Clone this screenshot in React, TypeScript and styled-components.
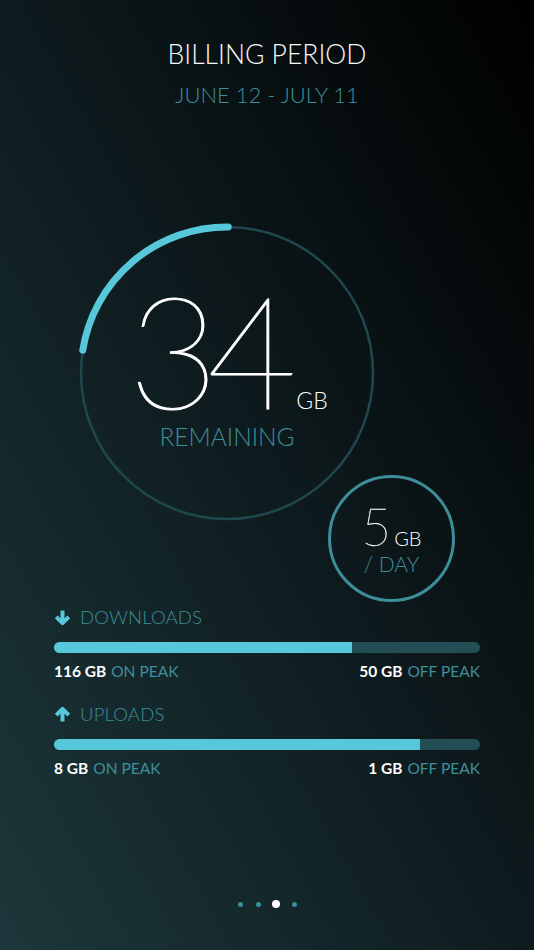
import React from "react";
import styled, { createGlobalStyle } from "styled-components";

const GlobalStyle = createGlobalStyle`
  html, body {
    margin: 0;
    padding: 0;
  }
  body {
    width: 534px;
    height: 950px;
    overflow: hidden;
    font-family: "Lato", "Open Sans", sans-serif;
    background: linear-gradient(to top right, #1c373b 0%, #0e1b1e 50%, #000000 100%);
  }
`;

const TEAL = "#3f8f9b";
const CYAN = "#56c8da";
const TRACK = "#244e55";

const Page = styled.div`
  box-sizing: border-box;
  width: 534px;
  height: 950px;
  padding: 0 54px;
  display: flex;
  flex-direction: column;
`;

const Header = styled.header`
  margin-top: 38px;
  display: flex;
  flex-direction: column;
  align-items: center;
`;

const Title = styled.h1`
  margin: 0;
  font-size: 26.5px;
  line-height: 32px;
  font-weight: 300;
  color: #f7f7f7;
`;

const Subtitle = styled.div`
  margin-top: 11px;
  font-size: 22px;
  line-height: 28px;
  font-weight: 300;
  color: ${TEAL};
`;

const GaugeArea = styled.section`
  position: relative;
  margin-top: 114px;
  height: 383px;
`;

const Gauge = styled.div`
  position: relative;
  margin-left: 23px;
  width: 300px;
  height: 300px;
  display: flex;
  flex-direction: column;
  align-items: center;
`;

const Ring = styled.svg`
  position: absolute;
  inset: 0;
`;

const BigRow = styled.div`
  position: relative;
  margin-top: 66px;
  height: 120px;
  display: flex;
  align-items: baseline;
  padding-left: 2px;
`;

const BigNumber = styled.span`
  font-size: 156px;
  line-height: 120px;
  font-weight: 200;
  color: #ffffff;
  letter-spacing: -12px;
  -webkit-text-stroke: 1.1px #ffffff;
`;

const BigUnit = styled.span`
  margin-left: 11px;
  font-size: 23px;
  line-height: 24px;
  font-weight: 300;
  color: #ffffff;
`;

const Remaining = styled.div`
  position: relative;
  margin-top: 13px;
  font-size: 24.5px;
  line-height: 30px;
  font-weight: 300;
  color: ${TEAL};
`;

const DayBadge = styled.div`
  position: absolute;
  left: 274px;
  top: 252px;
  box-sizing: border-box;
  width: 127px;
  height: 127px;
  border-radius: 50%;
  border: 3px solid #3d8e99;
  display: flex;
  flex-direction: column;
  align-items: center;
  padding-top: 24px;
`;

const DayRow = styled.div`
  display: flex;
  align-items: baseline;
  height: 50px;
`;

const DayNumber = styled.span`
  font-size: 51px;
  line-height: 50px;
  font-weight: 200;
  color: #ffffff;
  -webkit-text-stroke: 0.3px #ffffff;
`;

const DayUnit = styled.span`
  margin-left: 3px;
  font-size: 20px;
  line-height: 22px;
  font-weight: 300;
  color: #ffffff;
`;

const DayLabel = styled.div`
  font-size: 21px;
  line-height: 24px;
  font-weight: 300;
  color: ${TEAL};
`;

const Usage = styled.section<{ $first?: boolean }>`
  margin-top: ${(p) => (p.$first ? "0" : "22px")};
  display: flex;
  flex-direction: column;
`;

const UsageHeader = styled.div`
  display: flex;
  align-items: center;
  gap: 9px;
  height: 22px;
`;

const UsageTitle = styled.span`
  font-size: 18.5px;
  line-height: 22px;
  font-weight: 300;
  color: ${TEAL};
  letter-spacing: 0.2px;
`;

const Bar = styled.div`
  margin-top: 14px;
  height: 11px;
  border-radius: 6px;
  background: ${TRACK};
  overflow: hidden;
  display: flex;
`;

const BarFill = styled.div`
  height: 100%;
  background: ${CYAN};
`;

const Labels = styled.div`
  margin-top: 8px;
  display: flex;
  justify-content: space-between;
  font-size: 15.5px;
  line-height: 20px;
`;

const Label = styled.span`
  color: ${TEAL};
  font-weight: 400;
`;

const Value = styled.b`
  color: #ffffff;
  font-weight: 700;
  margin-right: 5px;
`;

const Pager = styled.nav`
  margin-top: auto;
  margin-bottom: 42px;
  display: flex;
  justify-content: center;
  align-items: center;
  gap: 13px;
`;

const Dot = styled.span<{ $active?: boolean }>`
  width: ${(p) => (p.$active ? "8px" : "5px")};
  height: ${(p) => (p.$active ? "8px" : "5px")};
  margin: ${(p) => (p.$active ? "0 -1.5px" : "0")};
  border-radius: 50%;
  background: ${(p) => (p.$active ? "#ffffff" : "#3a8f9a")};
`;

const Arrow = ({ up }: { up?: boolean }) => (
  <svg width="17" height="15" viewBox="0 0 17 15" style={{ transform: up ? "rotate(180deg)" : undefined }}>
    <path d="M8.5 0.5 V12.5 M2.2 6.8 L8.5 13.1 L14.8 6.8" fill="none" stroke={CYAN} strokeWidth="4" strokeLinejoin="miter" />
  </svg>
);

const arcPath = (() => {
  const c = 150;
  const r = 146;
  const a1 = (-89.5 * Math.PI) / 180;
  const a2 = (-171 * Math.PI) / 180;
  const x1 = c + r * Math.cos(a1);
  const y1 = c + r * Math.sin(a1);
  const x2 = c + r * Math.cos(a2);
  const y2 = c + r * Math.sin(a2);
  return `M ${x1} ${y1} A ${r} ${r} 0 0 0 ${x2} ${y2}`;
})();

type UsageData = {
  title: string;
  up?: boolean;
  onPeak: string;
  offPeak: string;
  ratio: number;
};

const usage: UsageData[] = [
  { title: "DOWNLOADS", onPeak: "116 GB", offPeak: "50 GB", ratio: 298 / 426 },
  { title: "UPLOADS", up: true, onPeak: "8 GB", offPeak: "1 GB", ratio: 366 / 426 },
];

export default function App() {
  return (
    <>
      <GlobalStyle />
      <Page>
        <Header>
          <Title>BILLING PERIOD</Title>
          <Subtitle>JUNE 12 - JULY 11</Subtitle>
        </Header>
        <GaugeArea>
          <Gauge>
            <Ring width="300" height="300" viewBox="0 0 300 300">
              <circle cx="150" cy="150" r="146" fill="none" stroke="#1f474d" strokeWidth="2.5" />
              <path d={arcPath} fill="none" stroke={CYAN} strokeWidth="7" strokeLinecap="round" />
            </Ring>
            <BigRow>
              <BigNumber>34</BigNumber>
              <BigUnit>GB</BigUnit>
            </BigRow>
            <Remaining>REMAINING</Remaining>
          </Gauge>
          <DayBadge>
            <DayRow>
              <DayNumber>5</DayNumber>
              <DayUnit>GB</DayUnit>
            </DayRow>
            <DayLabel>/ DAY</DayLabel>
          </DayBadge>
        </GaugeArea>
        {usage.map((u, i) => (
          <Usage key={u.title} $first={i === 0}>
            <UsageHeader>
              <Arrow up={u.up} />
              <UsageTitle>{u.title}</UsageTitle>
            </UsageHeader>
            <Bar>
              <BarFill style={{ width: `${u.ratio * 100}%` }} />
            </Bar>
            <Labels>
              <span>
                <Value>{u.onPeak}</Value>
                <Label>ON PEAK</Label>
              </span>
              <span>
                <Value>{u.offPeak}</Value>
                <Label>OFF PEAK</Label>
              </span>
            </Labels>
          </Usage>
        ))}
        <Pager>
          <Dot />
          <Dot />
          <Dot $active />
          <Dot />
        </Pager>
      </Page>
    </>
  );
}
